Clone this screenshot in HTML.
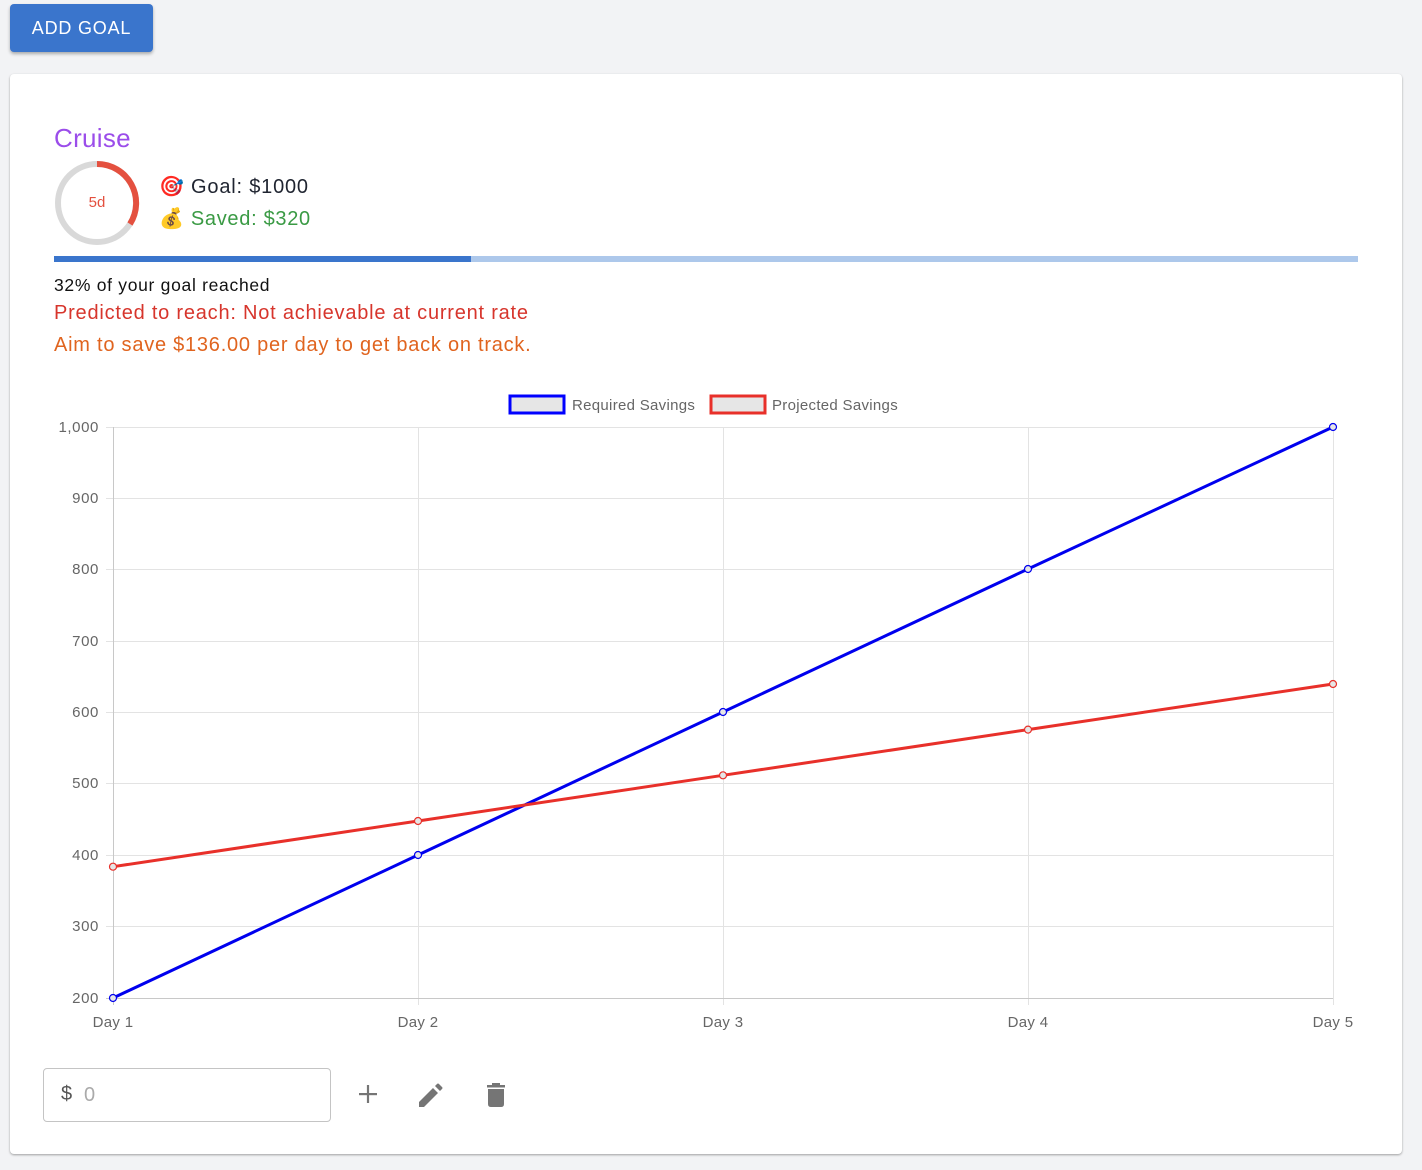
<!DOCTYPE html>
<html><head><meta charset="utf-8">
<style>
body{margin:0;background:#f2f3f5;font-family:"Liberation Sans",Arial,sans-serif;width:1422px;height:1170px;position:relative;overflow:hidden}
.btn{position:absolute;left:10px;top:4px;width:143px;height:48px;background:#3a75cc;border-radius:4px;color:#fff;font-size:18px;line-height:48px;text-align:center;box-shadow:0 2px 3px rgba(0,0,0,.3);letter-spacing:0.8px}
.card{position:absolute;left:10px;top:74px;width:1392px;height:1080px;background:#fff;border-radius:4px;box-shadow:0 1px 2px rgba(0,0,0,.35)}
.t{position:absolute;white-space:nowrap}
</style></head><body>
<div class="btn">ADD GOAL</div>
<div class="card"></div>
<div class="t" style="left:54px;top:123px;font-size:26px;color:#9b4dea;letter-spacing:0.3px">Cruise</div>
<svg style="position:absolute;left:54px;top:160px" width="86" height="86">
<circle cx="43" cy="43" r="39" fill="none" stroke="#d9d9d9" stroke-width="6"/>
<path d="M43 4 A39 39 0 0 1 76 64" fill="none" stroke="#e4503f" stroke-width="6"/>
<text x="43" y="47" text-anchor="middle" font-size="15" fill="#e4503f" font-family="Liberation Sans">5d</text>
</svg>
<div class="t" style="left:159px;top:174px;font-size:20px;color:#1f2430;letter-spacing:0.8px">🎯 Goal: $1000</div>
<div class="t" style="left:159px;top:206px;font-size:20px;color:#3a9a44;letter-spacing:0.7px">💰 Saved: $320</div>
<div style="position:absolute;left:54px;top:256px;width:1304px;height:6px;background:#adc8eb"></div>
<div style="position:absolute;left:54px;top:256px;width:417px;height:6px;background:#3a75cc"></div>
<div class="t" style="left:54px;top:275px;font-size:17.5px;color:#111;letter-spacing:0.7px">32% of your goal reached</div>
<div class="t" style="left:54px;top:302px;font-size:20px;color:#d7352c;letter-spacing:0.78px">Predicted to reach: Not achievable at current rate</div>
<div class="t" style="left:54px;top:334px;font-size:20px;color:#e0641f;letter-spacing:0.76px">Aim to save $136.00 per day to get back on track.</div>
<svg style="position:absolute;left:0;top:0" width="1422" height="1170" font-family="Liberation Sans" font-size="15" fill="#666">
<rect x="510" y="396" width="54" height="17" fill="#e6e6e6" stroke="#0000ff" stroke-width="3"/>
<text x="572" y="410" letter-spacing="0.3">Required Savings</text>
<rect x="711" y="396" width="54" height="17" fill="#e6e6e6" stroke="#e8302a" stroke-width="3"/>
<text x="772" y="410" letter-spacing="0.3">Projected Savings</text>
<g stroke="#e3e3e3" stroke-width="1">
<line x1="106" x2="1333" y1="427.5" y2="427.5"/><line x1="106" x2="1333" y1="498.5" y2="498.5"/><line x1="106" x2="1333" y1="569.5" y2="569.5"/><line x1="106" x2="1333" y1="641.5" y2="641.5"/><line x1="106" x2="1333" y1="712.5" y2="712.5"/><line x1="106" x2="1333" y1="783.5" y2="783.5"/><line x1="106" x2="1333" y1="855.5" y2="855.5"/><line x1="106" x2="1333" y1="926.5" y2="926.5"/>
<line x1="418.5" x2="418.5" y1="427" y2="1005"/><line x1="723.5" x2="723.5" y1="427" y2="1005"/><line x1="1028.5" x2="1028.5" y1="427" y2="1005"/><line x1="1333.5" x2="1333.5" y1="427" y2="1005"/>
</g>
<g stroke="#c8c8c8"><line x1="106" x2="1333" y1="998.5" y2="998.5"/><line x1="113.5" x2="113.5" y1="427" y2="1005"/></g>
<g text-anchor="end" letter-spacing="0.6"><text x="99" y="432">1,000</text><text x="99" y="503">900</text><text x="99" y="574">800</text><text x="99" y="646">700</text><text x="99" y="717">600</text><text x="99" y="788">500</text><text x="99" y="860">400</text><text x="99" y="931">300</text><text x="99" y="1003">200</text></g>
<g text-anchor="middle" letter-spacing="0.3"><text x="113" y="1027">Day 1</text><text x="418" y="1027">Day 2</text><text x="723" y="1027">Day 3</text><text x="1028" y="1027">Day 4</text><text x="1333" y="1027">Day 5</text></g>
<polyline points="113,998 418,855 723,712 1028,569 1333,427" fill="none" stroke="#0000ee" stroke-width="3"/>
<polyline points="113,866.7 418,821 723,775.3 1028,729.6 1333,684" fill="none" stroke="#e8302a" stroke-width="3"/>
<g fill="#e6e6e6" stroke="#0000ee" stroke-width="1.2"><circle cx="113" cy="998" r="3.5"/><circle cx="418" cy="855" r="3.5"/><circle cx="723" cy="712" r="3.5"/><circle cx="1028" cy="569" r="3.5"/><circle cx="1333" cy="427" r="3.5"/></g>
<g fill="#e6e6e6" stroke="#e8302a" stroke-width="1.2"><circle cx="113" cy="866.7" r="3.5"/><circle cx="418" cy="821" r="3.5"/><circle cx="723" cy="775.3" r="3.5"/><circle cx="1028" cy="729.6" r="3.5"/><circle cx="1333" cy="684" r="3.5"/></g>
<g fill="#757575" stroke="none">
<rect x="359" y="1093" width="18" height="2.2"/><rect x="366.9" y="1085" width="2.2" height="18"/>
<path d="M419 1102 L419 1107 L424 1107 L438 1093 L433 1088 Z M440 1091 L442 1089 Q443 1088 442 1087 L439 1084 Q438 1083 437 1084 L435 1086 Z"/>
<path d="M487 1085 L505 1085 L505 1087.5 L487 1087.5 Z M492 1083 L500 1083 L500 1085 L492 1085 Z M488 1089 L504 1089 L504 1104 Q504 1107 501 1107 L491 1107 Q488 1107 488 1104 Z"/>
</g>
</svg>
<div style="position:absolute;left:43px;top:1068px;width:286px;height:52px;border:1px solid #c4c4c4;border-radius:4px;background:#fff"></div>
<div class="t" style="left:61px;top:1083px;font-size:20px;color:#555">$</div>
<div class="t" style="left:84px;top:1084px;font-size:20px;color:#aaa">0</div>
</body></html>
